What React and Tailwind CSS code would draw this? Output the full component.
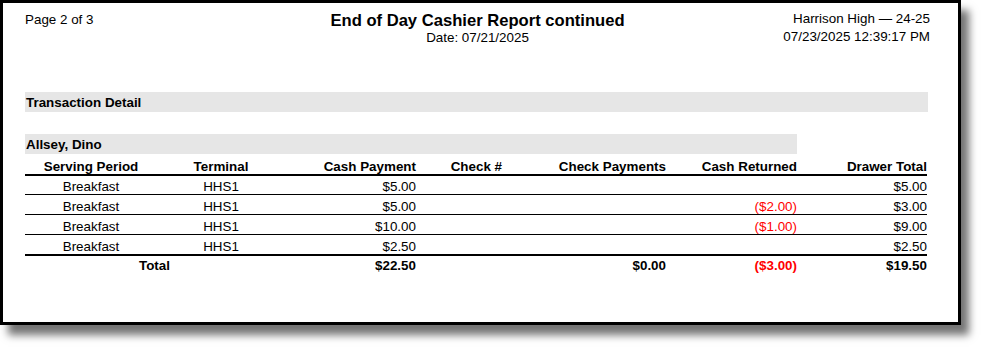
const cols = "grid grid-cols-[132px_128px_131px_86px_164px_131px_130px] w-[902px] items-end leading-[15px]"

const rows = [
  { period: "Breakfast", terminal: "HHS1", cash: "$5.00", returned: "", total: "$5.00" },
  { period: "Breakfast", terminal: "HHS1", cash: "$5.00", returned: "($2.00)", total: "$3.00" },
  { period: "Breakfast", terminal: "HHS1", cash: "$10.00", returned: "($1.00)", total: "$9.00" },
  { period: "Breakfast", terminal: "HHS1", cash: "$2.50", returned: "", total: "$2.50" },
]

const rowStyles = [
  "h-[19px] border-b border-black",
  "h-[20px] border-b border-black",
  "h-[20px] border-b border-black",
  "h-[21px] border-b-2 border-black",
]

export default function App() {
  return (
    <div className="bg-white w-[986px] h-[350px] font-['Liberation_Sans',Arial,sans-serif] text-black text-[13.4px]">
      <div className="box-border w-[961px] h-[325px] border-[3px] border-black bg-white shadow-[8px_10px_8px_rgba(0,0,0,0.55)] pt-[7px] pl-[22px]">
        {/* Header */}
        <div className="grid grid-cols-[1fr_auto_1fr] w-[905px] h-[82px]">
          <div className="pt-[2px] leading-[15px]">Page 2 of 3</div>
          <div className="pt-[2px] flex flex-col items-center">
            <div className="font-bold text-[16.6px] leading-[18px]">End of Day Cashier Report continued</div>
            <div className="leading-[15px]">Date: 07/21/2025</div>
          </div>
          <div className="text-right leading-[18px]">
            <div>Harrison High — 24-25</div>
            <div>07/23/2025 12:39:17 PM</div>
          </div>
        </div>

        {/* Section bar */}
        <div className="w-[903px] h-[20px] bg-[#e6e6e6] flex items-center pl-[1px] font-bold leading-[15px]">
          Transaction Detail
        </div>

        <div className="w-[772px] h-[20px] mt-[22px] bg-[#e6e6e6] flex items-center pl-[1px] font-bold leading-[15px]">
          Allsey, Dino
        </div>

        {/* Table */}
        <div className={`${cols} h-[22px] border-b-2 border-black font-bold`}>
          <div className="text-center">Serving Period</div>
          <div className="text-center">Terminal</div>
          <div className="text-right">Cash Payment</div>
          <div className="text-right">Check #</div>
          <div className="text-right">Check Payments</div>
          <div className="text-right">Cash Returned</div>
          <div className="text-right">Drawer Total</div>
        </div>

        {rows.map((r, i) => (
          <div key={i} className={`${cols} ${rowStyles[i]}`}>
            <div className="text-center">{r.period}</div>
            <div className="text-center">{r.terminal}</div>
            <div className="text-right">{r.cash}</div>
            <div className="text-right"></div>
            <div className="text-right"></div>
            <div className="text-right text-[#ff0000]">{r.returned}</div>
            <div className="text-right">{r.total}</div>
          </div>
        ))}

        <div className={`${cols} h-[17px] font-bold`}>
          <div className="col-span-2 pl-[114px]">Total</div>
          <div className="text-right">$22.50</div>
          <div></div>
          <div className="text-right">$0.00</div>
          <div className="text-right text-[#ff0000]">($3.00)</div>
          <div className="text-right">$19.50</div>
        </div>
      </div>
    </div>
  )
}
